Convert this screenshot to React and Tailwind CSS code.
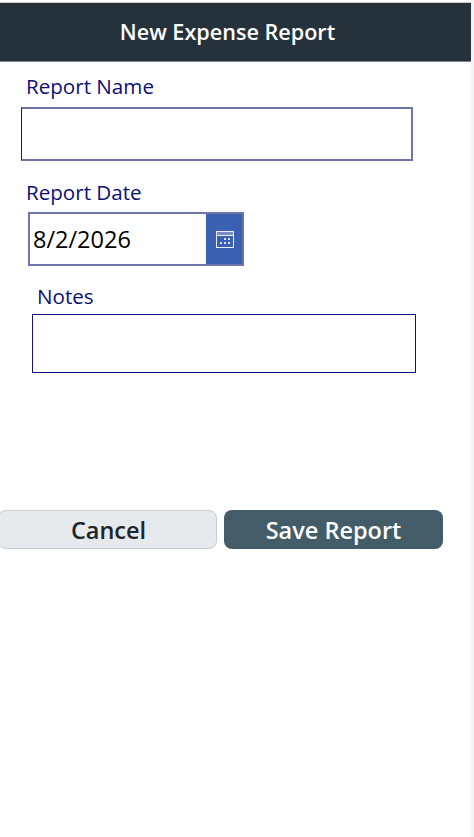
const font = { fontFamily: '"Open Sans", sans-serif' };

const CalendarIcon = () => (
  <svg width="18" height="17" viewBox="0 0 18 17" fill="none">
    <rect x="0.5" y="0.5" width="17" height="16" stroke="white" strokeOpacity="0.9" />
    <rect x="1" y="1" width="16" height="3" fill="white" fillOpacity="0.3" />
    <path d="M1 4.5H17" stroke="white" strokeOpacity="0.9" />
    <rect x="8" y="7" width="2" height="2" fill="white" fillOpacity="0.8" />
    <rect x="12" y="7" width="2" height="2" fill="white" fillOpacity="0.8" />
    <rect x="4" y="11" width="2" height="2" fill="white" fillOpacity="0.8" />
    <rect x="8" y="11" width="2" height="2" fill="white" fillOpacity="0.8" />
    <rect x="12" y="11" width="2" height="2" fill="white" fillOpacity="0.8" />
  </svg>
);

export default function App() {
  return (
    <div style={font} className="h-[837px] w-[474px] overflow-hidden bg-[#f4f4f4]">
      <div className="h-[837px] w-[471px] bg-white pt-[2px]">
        {/* header */}
        <div className="flex h-[60px] items-center justify-center border-t border-b border-t-[#c9cccf] border-b-[#7d868c] bg-[#25323c] pr-4 text-[21.6px] font-semibold text-white">
          New Expense Report
        </div>

        <label className="mt-[9px] ml-[26px] block text-[20.6px] leading-[30px] text-[#0a0f75]">Report Name</label>
        <input className="mt-[6px] ml-[21px] block h-[54px] w-[392px] border-2 border-l border-[#6f74aa] border-l-[#14186e] bg-white" />

        <label className="mt-[16px] ml-[26px] block text-[20.6px] leading-[30px] text-[#0a0f75]">Report Date</label>
        <div className="mt-[5px] ml-[28px] flex h-[54px] w-[216px] border-2 border-[#6f74aa]">
          <div className="flex flex-1 items-center pt-[2px] pl-[3px] text-[23.5px] text-black">8/2/2026</div>
          <div className="flex w-[36px] items-center justify-center bg-[#3a60b2] pl-[2px]">
            <CalendarIcon />
          </div>
        </div>

        <label className="mt-[15px] ml-[37px] block text-[20.6px] leading-[30px] text-[#0a0f75]">Notes</label>
        <textarea className="mt-[3px] ml-[32px] block h-[59px] w-[384px] resize-none border border-[#10107a] bg-white" />

        <div className="mt-[137px] ml-[-2px] flex gap-[7px]">
          <button className="h-[39px] w-[219px] rounded-[8px] border border-[#c9ccd0] bg-[#e7eaed] pt-[2px] pl-[2px] text-[23.5px] font-semibold text-[#212529]">
            Cancel
          </button>
          <button className="h-[39px] w-[219px] rounded-[8px] bg-[#435c67] pt-[2px] text-[23.5px] font-semibold text-white">
            Save Report
          </button>
        </div>
      </div>
    </div>
  );
}
